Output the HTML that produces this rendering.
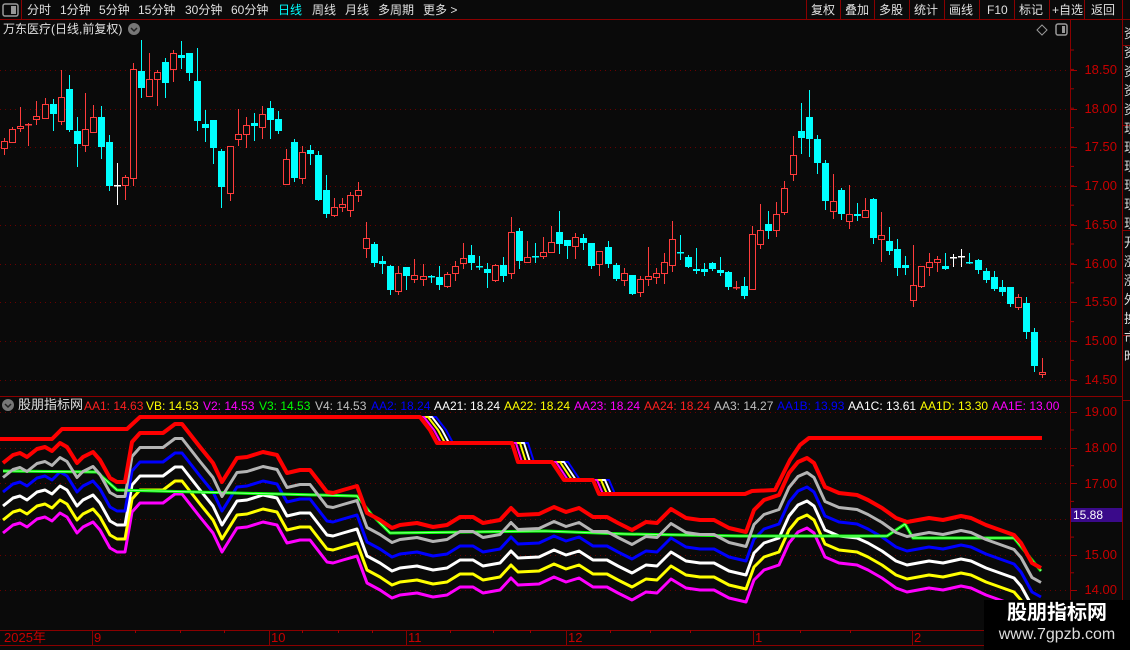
<!DOCTYPE html>
<html><head><meta charset="utf-8">
<style>
*{margin:0;padding:0;box-sizing:border-box}
body{width:1130px;height:650px;background:#0a0a0a;overflow:hidden;position:relative;font-family:"Liberation Sans","Noto Sans CJK SC",sans-serif;color:#e0e0e0}
.t{position:absolute;white-space:nowrap;font-size:12px;line-height:14px}
.ax{position:absolute;font-size:13px;color:#c80000;right:13px;line-height:14px}
svg{position:absolute;left:0;top:0}
</style></head><body>
<svg id="s" width="1130" height="650" xmlns="http://www.w3.org/2000/svg">
<g stroke="#8a0000" stroke-width="1" fill="none">
<line x1="0" y1="19.5" x2="1130" y2="19.5"/>
<line x1="21.5" y1="0" x2="21.5" y2="19"/>
<line x1="0" y1="396.5" x2="1122" y2="396.5"/>
<line x1="1070.5" y1="20" x2="1070.5" y2="645"/>
<line x1="1122.5" y1="20" x2="1122.5" y2="650"/>
<line x1="0" y1="630.5" x2="1070" y2="630.5"/>
<line x1="0" y1="645.5" x2="1070" y2="645.5"/>
<line x1="806.5" y1="0" x2="806.5" y2="19"/><line x1="840.5" y1="0" x2="840.5" y2="19"/><line x1="874.5" y1="0" x2="874.5" y2="19"/><line x1="909.5" y1="0" x2="909.5" y2="19"/><line x1="944.5" y1="0" x2="944.5" y2="19"/><line x1="979.5" y1="0" x2="979.5" y2="19"/><line x1="1014.5" y1="0" x2="1014.5" y2="19"/><line x1="1049.5" y1="0" x2="1049.5" y2="19"/><line x1="1084.5" y1="0" x2="1084.5" y2="19"/><line x1="1122.5" y1="0" x2="1122.5" y2="19"/>
<line x1="92.5" y1="630" x2="92.5" y2="645"/><line x1="269.5" y1="630" x2="269.5" y2="645"/><line x1="406.5" y1="630" x2="406.5" y2="645"/><line x1="566.5" y1="630" x2="566.5" y2="645"/><line x1="753.5" y1="630" x2="753.5" y2="645"/><line x1="912.5" y1="630" x2="912.5" y2="645"/>
<line x1="1122" y1="45.5" x2="1130" y2="45.5"/><line x1="1122" y1="125.5" x2="1130" y2="125.5"/><line x1="1122" y1="230.5" x2="1130" y2="230.5"/><line x1="1122" y1="335.5" x2="1130" y2="335.5"/><line x1="1122" y1="400.5" x2="1130" y2="400.5"/>
</g>
<g id="grid" stroke="#6a0000" stroke-width="1" stroke-dasharray="1 4"></g>
<g id="ticks" stroke="#a00000" stroke-width="1"></g>
<g id="cand"></g>
<g id="ind" fill="none" stroke-linejoin="round"></g>
<rect x="3" y="4" width="15" height="12" rx="2" fill="none" stroke="#999" stroke-width="1.5"/>
<rect x="11" y="6" width="5" height="8" fill="#999"/>
<circle cx="134" cy="29" r="6" fill="#777"/><path d="M131 28l3 3 3-3" stroke="#222" stroke-width="1.5" fill="none"/>
<circle cx="8" cy="405" r="6" fill="#777"/><path d="M5 404l3 3 3-3" stroke="#222" stroke-width="1.5" fill="none"/>
<path d="M1042 25l5 5-5 5-5-5z" fill="none" stroke="#999"/>
<rect x="1056" y="24" width="11" height="11" rx="2" fill="none" stroke="#999" stroke-width="1.5"/><rect x="1062" y="26" width="3" height="7" fill="#999"/>
<rect x="1071" y="508" width="51" height="14" fill="#3a0a8a"/>
<rect x="984" y="600" width="146" height="50" fill="#000"/>
</svg>

<div class="t" style="left:27px;top:3px">分时</div>
<div class="t" style="left:60px;top:3px">1分钟</div>
<div class="t" style="left:99px;top:3px">5分钟</div>
<div class="t" style="left:138px;top:3px">15分钟</div>
<div class="t" style="left:185px;top:3px">30分钟</div>
<div class="t" style="left:231px;top:3px">60分钟</div>
<div class="t" style="left:278px;top:3px;color:#00ffff">日线</div>
<div class="t" style="left:312px;top:3px">周线</div>
<div class="t" style="left:345px;top:3px">月线</div>
<div class="t" style="left:378px;top:3px">多周期</div>
<div class="t" style="left:423px;top:3px">更多 &gt;</div>
<div class="t" style="left:811px;top:3px">复权</div>
<div class="t" style="left:845px;top:3px">叠加</div>
<div class="t" style="left:879px;top:3px">多股</div>
<div class="t" style="left:914px;top:3px">统计</div>
<div class="t" style="left:949px;top:3px">画线</div>
<div class="t" style="left:987px;top:3px">F10</div>
<div class="t" style="left:1019px;top:3px">标记</div>
<div class="t" style="left:1052px;top:3px">+自选</div>
<div class="t" style="left:1091px;top:3px">返回</div>
<div class="t" style="left:3px;top:22px">万东医疗(日线,前复权)</div>

<div class="ax" style="top:63px">18.50</div>
<div class="ax" style="top:102px">18.00</div>
<div class="ax" style="top:140px">17.50</div>
<div class="ax" style="top:179px">17.00</div>
<div class="ax" style="top:218px">16.50</div>
<div class="ax" style="top:257px">16.00</div>
<div class="ax" style="top:295px">15.50</div>
<div class="ax" style="top:334px">15.00</div>
<div class="ax" style="top:373px">14.50</div>
<div class="ax" style="top:405px">19.00</div>
<div class="ax" style="top:441px">18.00</div>
<div class="ax" style="top:477px">17.00</div>
<div class="ax" style="top:548px">15.00</div>
<div class="ax" style="top:583px">14.00</div>
<div class="t" style="left:1073px;top:508px;font-size:12px;color:#fff">15.88</div>

<div class="t" style="left:1124px;top:24px;width:6px;overflow:hidden;font-size:13px;line-height:19px;color:#ddd;white-space:normal">资<br>资<br>资<br>资<br>资<br>现<br>现<br>现<br>现<br>现<br>现<br>开<br>涨<br>涨<br>外<br>换<br>市<br>昨</div>

<div class="t" style="left:18px;top:398px;font-size:13px">股朋指标网</div>
<div class="t" style="left:84px;top:399px;color:#ff2020">AA1: 14.63</div>
<div class="t" style="left:146px;top:399px;color:#ffff00">VB: 14.53</div>
<div class="t" style="left:203px;top:399px;color:#ff00ff">V2: 14.53</div>
<div class="t" style="left:259px;top:399px;color:#00ff00">V3: 14.53</div>
<div class="t" style="left:315px;top:399px;color:#c0c0c0">V4: 14.53</div>
<div class="t" style="left:371px;top:399px;color:#0000ff">AA2: 18.24</div>
<div class="t" style="left:434px;top:399px;color:#ffffff">AA21: 18.24</div>
<div class="t" style="left:504px;top:399px;color:#ffff00">AA22: 18.24</div>
<div class="t" style="left:574px;top:399px;color:#ff00ff">AA23: 18.24</div>
<div class="t" style="left:644px;top:399px;color:#ff2020">AA24: 18.24</div>
<div class="t" style="left:714px;top:399px;color:#c0c0c0">AA3: 14.27</div>
<div class="t" style="left:777px;top:399px;color:#0000ff">AA1B: 13.93</div>
<div class="t" style="left:848px;top:399px;color:#ffffff">AA1C: 13.61</div>
<div class="t" style="left:920px;top:399px;color:#ffff00">AA1D: 13.30</div>
<div class="t" style="left:992px;top:399px;color:#ff00ff">AA1E: 13.00</div>

<div class="t" style="left:4px;top:631px;color:#c80000;font-size:13px">2025年</div>
<div class="t" style="left:94px;top:631px;color:#c80000;font-size:13px">9</div>
<div class="t" style="left:271px;top:631px;color:#c80000;font-size:13px">10</div>
<div class="t" style="left:408px;top:631px;color:#c80000;font-size:13px">11</div>
<div class="t" style="left:568px;top:631px;color:#c80000;font-size:13px">12</div>
<div class="t" style="left:755px;top:631px;color:#c80000;font-size:13px">1</div>
<div class="t" style="left:914px;top:631px;color:#c80000;font-size:13px">2</div>

<div class="t" style="left:984px;top:601px;width:146px;text-align:center;font-size:20px;line-height:24px;font-weight:bold;color:#fff">股朋指标网</div>
<div class="t" style="left:984px;top:625px;width:146px;text-align:center;font-size:16px;line-height:20px;color:#ddd">www.7gpzb.com</div>

<script>
var NS="http://www.w3.org/2000/svg";
function el(p,t,a){var e=document.createElementNS(NS,t);for(var k in a)e.setAttribute(k,a[k]);p.appendChild(e);return e;}
var grid=document.getElementById('grid'),ticks=document.getElementById('ticks');
[70,109,147,186,225,264,302,341,380,412,448,483,519,555,590].forEach(function(y){el(grid,'line',{x1:0,y1:y+.5,x2:1070,y2:y+.5});el(ticks,'line',{x1:1071,y1:y+.5,x2:1077,y2:y+.5});});
for(var y=50;y<395;y+=19.4){el(ticks,'line',{x1:1071,y1:y,x2:1074,y2:y});}
for(var y=430;y<628;y+=35.7){el(ticks,'line',{x1:1071,y1:y,x2:1074,y2:y});}
[135,180,224,302,338,372,450,493,530,610,650,690,800,850].forEach(function(x){el(ticks,'line',{x1:x+.5,y1:630,x2:x+.5,y2:633});});
var D="r 141 148 138 154|r 129 142 127 142|r 126 128 107 131|r 124 125 123 145|r 116 119 101 124|r 104 118 98 118|c 104 114 99 130|r 97 121 70 124|c 89 130 75 131|c 131 144 117 166|r 129 145 93 151|r 117 132 105 132|c 117 147 106 158|c 142 186 135 190|w 185 185 163 204|r 177 185 175 199|r 69 178 63 185|c 71 88 40 97|r 79 96 53 96|r 72 79 70 105|c 62 83 58 97|r 53 69 50 81|c 55 58 41 68|c 53 73 53 80|c 81 121 48 130|c 124 128 110 141|c 120 148 120 163|c 151 187 149 207|r 146 193 146 200|r 134 139 109 145|r 125 134 117 147|c 123 126 113 140|r 114 127 106 138|c 108 120 101 138|c 119 131 111 133|r 159 184 149 184|c 142 178 139 181|r 152 178 146 183|c 150 154 145 164|c 155 200 151 200|c 190 214 175 217|r 207 215 198 216|r 204 207 198 211|r 195 210 192 216|r 190 195 182 201|r 238 248 222 257|c 244 263 242 266|c 261 264 256 273|c 266 290 265 294|r 273 291 266 294|c 267 276 267 289|r 275 279 259 282|r 276 279 264 285|c 276 277 275 282|c 277 285 266 289|r 274 286 272 287|r 266 273 261 280|r 258 263 243 268|c 255 263 245 269|c 266 267 256 269|c 269 273 263 287|r 265 280 264 281|c 265 276 257 281|r 232 273 217 278|c 231 261 228 268|r 257 262 241 262|c 256 257 243 262|r 252 256 237 258|r 242 252 226 252|c 232 244 211 253|c 240 246 240 258|r 237 246 233 258|c 238 243 234 249|c 243 266 243 268|r 251 264 251 275|c 247 264 241 267|c 265 279 263 280|r 273 280 268 285|c 275 294 275 294|r 279 292 276 296|r 276 279 247 285|r 273 277 268 283|r 262 273 253 283|r 239 265 221 271|c 252 253 235 259|c 257 267 255 267|c 269 271 248 273|c 269 272 263 275|c 263 269 262 270|c 270 273 257 275|c 272 287 271 289|r 287 288 281 289|c 286 296 277 298|r 234 289 226 289|r 230 244 204 248|c 224 231 211 238|r 214 230 202 236|r 188 212 181 214|r 155 174 136 180|c 131 138 103 153|c 117 139 90 156|c 139 163 135 173|c 163 201 160 209|r 201 211 174 218|c 190 214 188 219|r 214 221 185 228|c 214 216 203 220|r 210 217 198 217|c 199 238 198 243|r 235 239 212 261|c 241 251 227 254|c 249 268 239 275|c 265 268 256 274|r 285 300 245 306|r 266 286 266 287|r 262 267 253 275|r 259 262 256 271|c 266 269 253 269|w 257 257 254 266|w 256 256 249 266|c 262 263 253 263|c 260 270 259 273|c 271 280 268 282|c 277 289 271 290|c 287 292 280 295|c 287 304 287 306|r 297 307 294 309|c 303 332 297 338|c 332 366 328 371|r 372 374 358 377";
var cg=document.getElementById('cand');
D.split('|').forEach(function(s,i){var p=s.split(' '),t=p[0],a=+p[1],b=+p[2],h=+p[3],l=+p[4];var x=Math.round(4.3+8.043*i);
var col=t=='r'?'#ff3c3c':t=='c'?'#00ffff':'#ffffff';
el(cg,'line',{x1:x+.5,y1:h,x2:x+.5,y2:l+1,stroke:col,'stroke-width':1});
if(t=='r'&&b-a>=2){el(cg,'rect',{x:x-2.5,y:a+.5,width:6,height:b-a,fill:'#0a0a0a',stroke:col,'stroke-width':1});}
else{el(cg,'rect',{x:x-3,y:a,width:7,height:Math.max(b-a,1.5),fill:col});}
});
var ind=document.getElementById('ind');
function pl(pts,col,w,dx,dy){return el(ind,'polyline',{points:pts.map(function(p){return (p[0]+(dx||0))+','+(p[1]+(dy||0));}).join(' '),stroke:col,'stroke-width':w});}
var R=[[3,463],[13,455],[20,453],[27,457],[37,449],[45,447],[52,451],[60,443],[67,447],[77,463],[83,457],[93,452],[100,460],[110,478],[117,482],[125,482],[132,442],[140,433],[163,433],[175,424],[182,424],[200,447],[213,463],[222,482],[237,458],[247,457],[263,452],[277,455],[287,473],[300,470],[310,470],[327,492],[333,493],[343,490],[357,486],[367,513],[380,520],[392,528],[400,525],[417,523],[433,527],[447,525],[460,517],[473,517],[483,523],[500,520],[511,508],[518,515],[539,514],[554,507],[566,512],[579,508],[593,517],[607,517],[618,523],[632,530],[646,522],[657,523],[671,509],[686,518],[700,520],[714,520],[729,528],[746,532],[754,510],[764,500],[779,495],[789,473],[798,462],[807,458],[814,463],[825,487],[839,493],[857,495],[868,500],[882,508],[896,518],[907,522],[918,520],[929,518],[943,520],[961,516],[971,518],[986,525],[1000,530],[1014,535],[1021,543],[1032,563],[1041,568]];
var G=[[3,471],[97,472],[117,490],[357,496],[372,515],[390,533],[545,531],[625,534],[740,536],[887,536],[905,524],[913,538],[1014,538],[1041,571]];
var S=[[0,439],[52,439],[62,429],[127,429],[140,417],[420,417],[430,430],[437,443],[512,443],[518,462],[552,462],[564,480],[593,480],[599,494],[745,494],[752,491],[775,490],[790,460],[800,445],[809,438],[1042,438]];
var cl=el(document.getElementById('s'),'clipPath',{id:'cp'});el(cl,'rect',{x:405,y:400,width:235,height:100});
var gs=el(ind,'g',{'clip-path':'url(#cp)'});
[['#0000ff',16],['#ffffff',12],['#ffff00',8],['#ff00ff',4]].forEach(function(c){var e=el(gs,'polyline',{points:S.map(function(p){return (p[0]+c[1])+','+p[1];}).join(' '),stroke:c[0],'stroke-width':2,fill:'none'});});
pl(R,'#ff00ff',3,0,70);
pl(R,'#ffff00',3,0,57);
pl(R,'#ffffff',3,0,43);
pl(R,'#0000ff',3,0,29);
pl(G,'#00ff00',3);
pl(G,'#90ff90',1);
pl(R,'#b4b4b4',3,0,14.5);
pl(R,'#ff0000',4);
pl(S,'#ff0000',4);
</script>
</body></html>
